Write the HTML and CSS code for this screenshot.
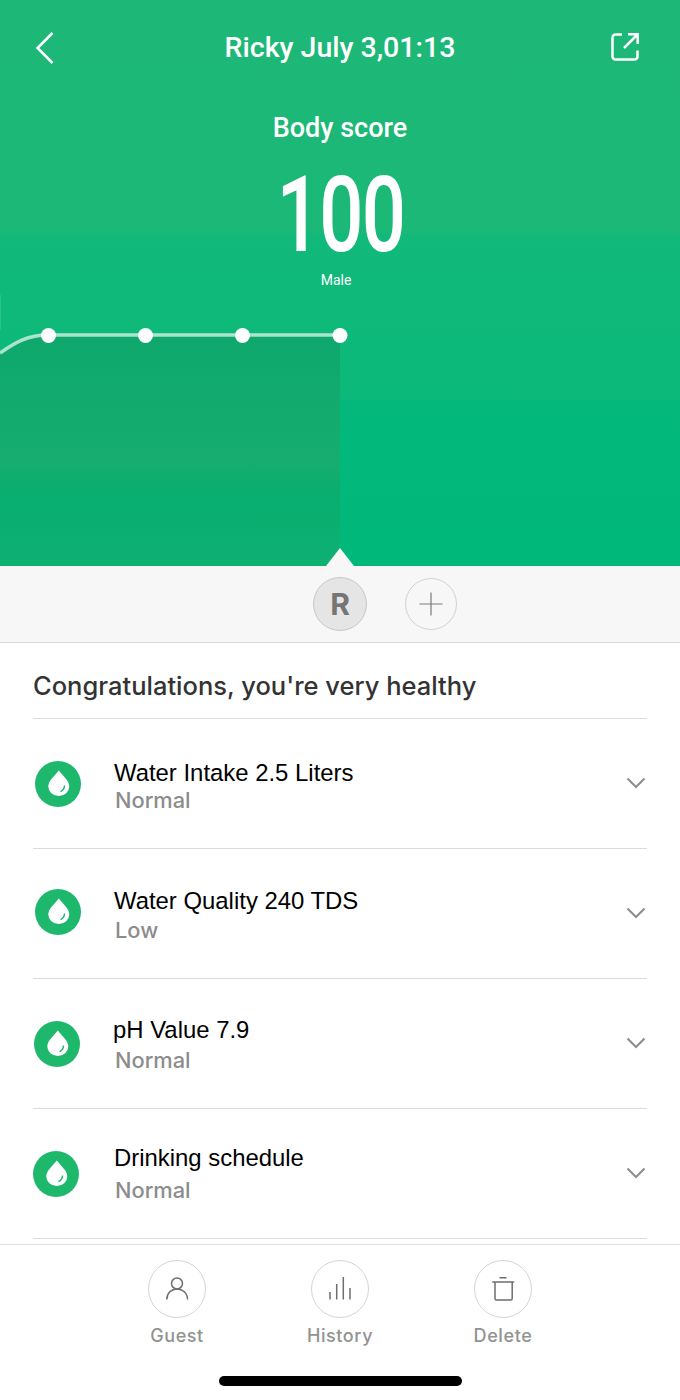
FILE: index.html
```html
<!DOCTYPE html>
<html lang="en">
<head>
<meta charset="utf-8">
<title>Body score</title>
<link rel="stylesheet" href="styles.css">
</head>
<body>
<div class="app">
  <section class="hero">
    <header class="topbar">
      <svg class="back" width="24" height="34" viewBox="0 0 24 34"><path d="M19.500 2 4.500 17 19.500 32"/></svg>
      <h1 class="title">Ricky July 3,01:13</h1>
      <svg class="share" width="28" height="28" viewBox="0 0 28 28"><path d="M11 1.500H4.500A3 3 0 0 0 1.500 4.500V23.500A3 3 0 0 0 4.500 26.500H23.500A3 3 0 0 0 26.500 23.500V17.500M13 15 26 2M17 1.300H26.700V11"/></svg>
    </header>
    <div class="score">
      <div class="score-label">Body score</div>
      <div class="score-value">100</div>
      <div class="score-sex">Male</div>
    </div>
    <svg class="chart" width="680" height="276" viewBox="0 -30 680 276">
      <defs>
        <linearGradient id="area" x1="0" y1="0" x2="0" y2="1">
          <stop offset="0" stop-color="#0ea86c"/>
          <stop offset="0.55" stop-color="#17ad70"/>
          <stop offset="0.7" stop-color="#08ae6f"/>
          <stop offset="1" stop-color="#0fb173"/>
        </linearGradient>
      </defs>
      <path class="tick" d="M0.500 -25V10"/>
      <path class="area" d="M0 33C16 22 28 15 48 15H340V246H0Z" fill="url(#area)"/>
      <path class="line" d="M0 33C16 22 28 15 48 15H340"/>
      <circle class="dot" cx="48.500" cy="15.500" r="7.500"/>
      <circle class="dot" cx="145.500" cy="15.500" r="7.500"/>
      <circle class="dot" cx="242.500" cy="15.500" r="7.500"/>
      <circle class="dot" cx="340" cy="15.500" r="7.500"/>
      <path class="pointer" d="M326 246 340 228 354 246Z"/>
    </svg>
  </section>

  <nav class="people">
    <div class="avatar">R</div>
    <div class="add">
      <svg width="24" height="24" viewBox="0 0 24 24"><path d="M0.500 12H23.500M12 0.500V23.500"/></svg>
    </div>
  </nav>

  <main class="report">
    <h2 class="headline">Congratulations, you're very healthy</h2>
    <ul class="metrics">
      <li class="metric metric-a">
        <svg class="drop-icon" width="46" height="46" viewBox="0 0 46 46"><circle cx="23" cy="23" r="23"/><path class="drop" d="M23.800 9.400C28 15 34.300 19.500 34.300 25.500A10.500 9.500 0 0 1 13.300 25.500C13.300 19.500 19.600 15 23.800 9.400Z"/><path class="glint" d="M29.500 24.500C29.500 27.500 28 29.500 25.500 30.700"/></svg>
        <div class="metric-text">
          <div class="metric-name">Water Intake 2.5 Liters</div>
          <div class="metric-state">Normal</div>
        </div>
        <svg class="chevron" width="20" height="12" viewBox="0 0 20 12"><path d="M1.500 1.500 10 10 18.500 1.500"/></svg>
      </li>
      <li class="metric metric-b">
        <svg class="drop-icon" width="46" height="46" viewBox="0 0 46 46"><circle cx="23" cy="23" r="23"/><path class="drop" d="M23.800 9.400C28 15 34.300 19.500 34.300 25.500A10.500 9.500 0 0 1 13.300 25.500C13.300 19.500 19.600 15 23.800 9.400Z"/><path class="glint" d="M29.500 24.500C29.500 27.500 28 29.500 25.500 30.700"/></svg>
        <div class="metric-text">
          <div class="metric-name">Water Quality 240 TDS</div>
          <div class="metric-state">Low</div>
        </div>
        <svg class="chevron" width="20" height="12" viewBox="0 0 20 12"><path d="M1.500 1.500 10 10 18.500 1.500"/></svg>
      </li>
      <li class="metric metric-c">
        <svg class="drop-icon" width="46" height="46" viewBox="0 0 46 46"><circle cx="23" cy="23" r="23"/><path class="drop" d="M23.800 9.400C28 15 34.300 19.500 34.300 25.500A10.500 9.500 0 0 1 13.300 25.500C13.300 19.500 19.600 15 23.800 9.400Z"/><path class="glint" d="M29.500 24.500C29.500 27.500 28 29.500 25.500 30.700"/></svg>
        <div class="metric-text">
          <div class="metric-name">pH Value 7.9</div>
          <div class="metric-state">Normal</div>
        </div>
        <svg class="chevron" width="20" height="12" viewBox="0 0 20 12"><path d="M1.500 1.500 10 10 18.500 1.500"/></svg>
      </li>
      <li class="metric metric-d">
        <svg class="drop-icon" width="46" height="46" viewBox="0 0 46 46"><circle cx="23" cy="23" r="23"/><path class="drop" d="M23.800 9.400C28 15 34.300 19.500 34.300 25.500A10.500 9.500 0 0 1 13.300 25.500C13.300 19.500 19.600 15 23.800 9.400Z"/><path class="glint" d="M29.500 24.500C29.500 27.500 28 29.500 25.500 30.700"/></svg>
        <div class="metric-text">
          <div class="metric-name">Drinking schedule</div>
          <div class="metric-state">Normal</div>
        </div>
        <svg class="chevron" width="20" height="12" viewBox="0 0 20 12"><path d="M1.500 1.500 10 10 18.500 1.500"/></svg>
      </li>
    </ul>
  </main>

  <footer class="actions">
    <div class="action">
      <div class="action-circle">
        <svg width="24" height="24" viewBox="0 0 24 24"><circle cx="12" cy="6.500" r="5.500"/><path d="M1.800 22.500C1.800 16 6.500 12 12 12S22.500 16 22.500 22.500"/></svg>
      </div>
      <span class="action-label">Guest</span>
    </div>
    <div class="action">
      <div class="action-circle">
        <svg width="24" height="24" viewBox="0 0 24 24"><path d="M2 15V22.500M8.700 7V22.500M15.300 0V22.500M22 11V22.500"/></svg>
      </div>
      <span class="action-label">History</span>
    </div>
    <div class="action">
      <div class="action-circle">
        <svg width="24" height="24" viewBox="0 0 24 24"><path d="M1.200 5H23.200M8.500 0.800H15.500M4 5V21.500A1.500 1.500 0 0 0 5.500 23H19.700A1.500 1.500 0 0 0 21.200 21.500V5"/></svg>
      </div>
      <span class="action-label">Delete</span>
    </div>
  </footer>
  <div class="home-row"><div class="home-bar"></div></div>
</div>
</body>
</html>
```
FILE: styles.css
```css
* { box-sizing: border-box; }
html, body { margin: 0; padding: 0; background: #fff; }
body { font-family: "Liberation Sans", Arial, sans-serif; }
.app { width: 680px; height: 1400px; display: flex; flex-direction: column; overflow: hidden; }

.hero {
  height: 566px;
  display: flex;
  flex-direction: column;
  color: #fff;
  background: linear-gradient(#1db878 0, #1cb878 230px, #11b97a 236px, #0bb97a 400px, #03b87a 401px, #00b87a 566px);
}
.topbar {
  height: 94px;
  padding: 31px 33px 0;
  display: grid;
  grid-template-columns: 1fr auto 1fr;
  align-items: start;
}
.back, .share { fill: none; stroke: #fff; }
.back { stroke-width: 2.500; }
.share { stroke-width: 2.500; margin: 2px 8px 0 0; justify-self: end; }
.title {
  margin: 0;
  font: 500 28.500px/34px Roboto, sans-serif;
}
.score { display: flex; flex-direction: column; align-items: center; height: 196px; }
.score-label { font: 500 27px/34px Roboto, sans-serif; margin-top: 17px; }
.score-value {
  font: 500 105px/100px Roboto, sans-serif;
  margin: 21px 0 0 2px;
  letter-spacing: -2px;
  transform: scaleX(0.74);
}
.score-sex { font: 400 14px/18px Roboto, sans-serif; margin: 5px 8px 0 0; }
.chart { display: block; }
.tick { fill: none; stroke: rgba(255, 255, 255, 0.12); stroke-width: 1; }
.area { stroke: none; }
.line { fill: none; stroke: rgba(255, 255, 255, 0.65); stroke-width: 3.500; }
.dot { fill: #fff; }
.pointer { fill: #f7f7f7; }

.people {
  height: 77px;
  background: #f7f7f7;
  border-bottom: 1px solid #d9d9d9;
  padding-left: 313px;
  display: flex;
  align-items: center;
  gap: 38px;
}
.avatar {
  width: 54px;
  height: 54px;
  border-radius: 50%;
  background: #e5e5e5;
  border: 1px solid #c8c8c8;
  color: #757575;
  font: 700 30px/52px Inter, sans-serif;
  text-align: center;
}
.add {
  width: 52px;
  height: 52px;
  border-radius: 50%;
  border: 1px solid #d2d2d2;
  display: flex;
  align-items: center;
  justify-content: center;
}
.add path { fill: none; stroke: #7a7a7a; stroke-width: 1.200; }

.report { flex: 1; padding: 0 33px; }
.headline {
  margin: 0;
  height: 76px;
  border-bottom: 1px solid #dcdcdc;
  font: 500 25.500px/86px Inter, sans-serif;
  color: #333;
  white-space: nowrap;
}
.metrics { list-style: none; margin: 0; padding: 0; }
.metric {
  height: 130px;
  border-bottom: 1px solid #dcdcdc;
  display: flex;
  align-items: center;
  padding: 0 1px 0 2px;
}
.drop-icon circle { fill: #1db86c; }
.drop-icon .drop { fill: #fff; }
.drop-icon .glint { fill: none; stroke: #1db86c; stroke-width: 1.400; }
.metric-text { flex: 1; margin-left: 33px; padding-top: 4px; }
.metric-name { font: 400 23.900px/28px "Liberation Sans", Arial, sans-serif; color: #000; }
.metric-state { font: 500 21.800px/28px Inter, sans-serif; color: #8c8c8c; margin-left: 1px; }
.metric-a .metric-name { margin: 1px 0 -1px; }
.metric-b .metric-name { margin: -1px 0 1px; }
.metric-b .drop-icon { margin-top: -4px; }
.metric-c .metric-name { margin: -2px 0 2px -1px; }
.metric-c .drop-icon { margin: 0 1px 0 -1px; }
.metric-d .metric-name { margin: -4px 0 4px; }
.metric-d .drop-icon { margin: 0 2px 0 -2px; }
.chevron { fill: none; stroke: #8f8f8f; stroke-width: 2.200; margin-top: -2px; }

.actions {
  height: 121px;
  border-top: 1px solid #dfdfdf;
  display: flex;
  justify-content: center;
  gap: 105px;
  padding-top: 15px;
}
.action { width: 58px; display: flex; flex-direction: column; align-items: center; }
.action-circle {
  width: 58px;
  height: 58px;
  border-radius: 50%;
  border: 1px solid #d4d4d4;
  display: flex;
  align-items: center;
  justify-content: center;
}
.action-circle svg { fill: none; stroke: #6e6e6e; stroke-width: 1.500; }
.action-label {
  font: 500 18px/24px Inter, sans-serif;
  letter-spacing: 0.6px;
  color: #929292;
  margin-top: 6px;
  white-space: nowrap;
}
.home-row { height: 35px; display: flex; justify-content: center; }
.home-bar { width: 243px; height: 10px; border-radius: 5px; background: #000; margin-top: 11px; }
```
